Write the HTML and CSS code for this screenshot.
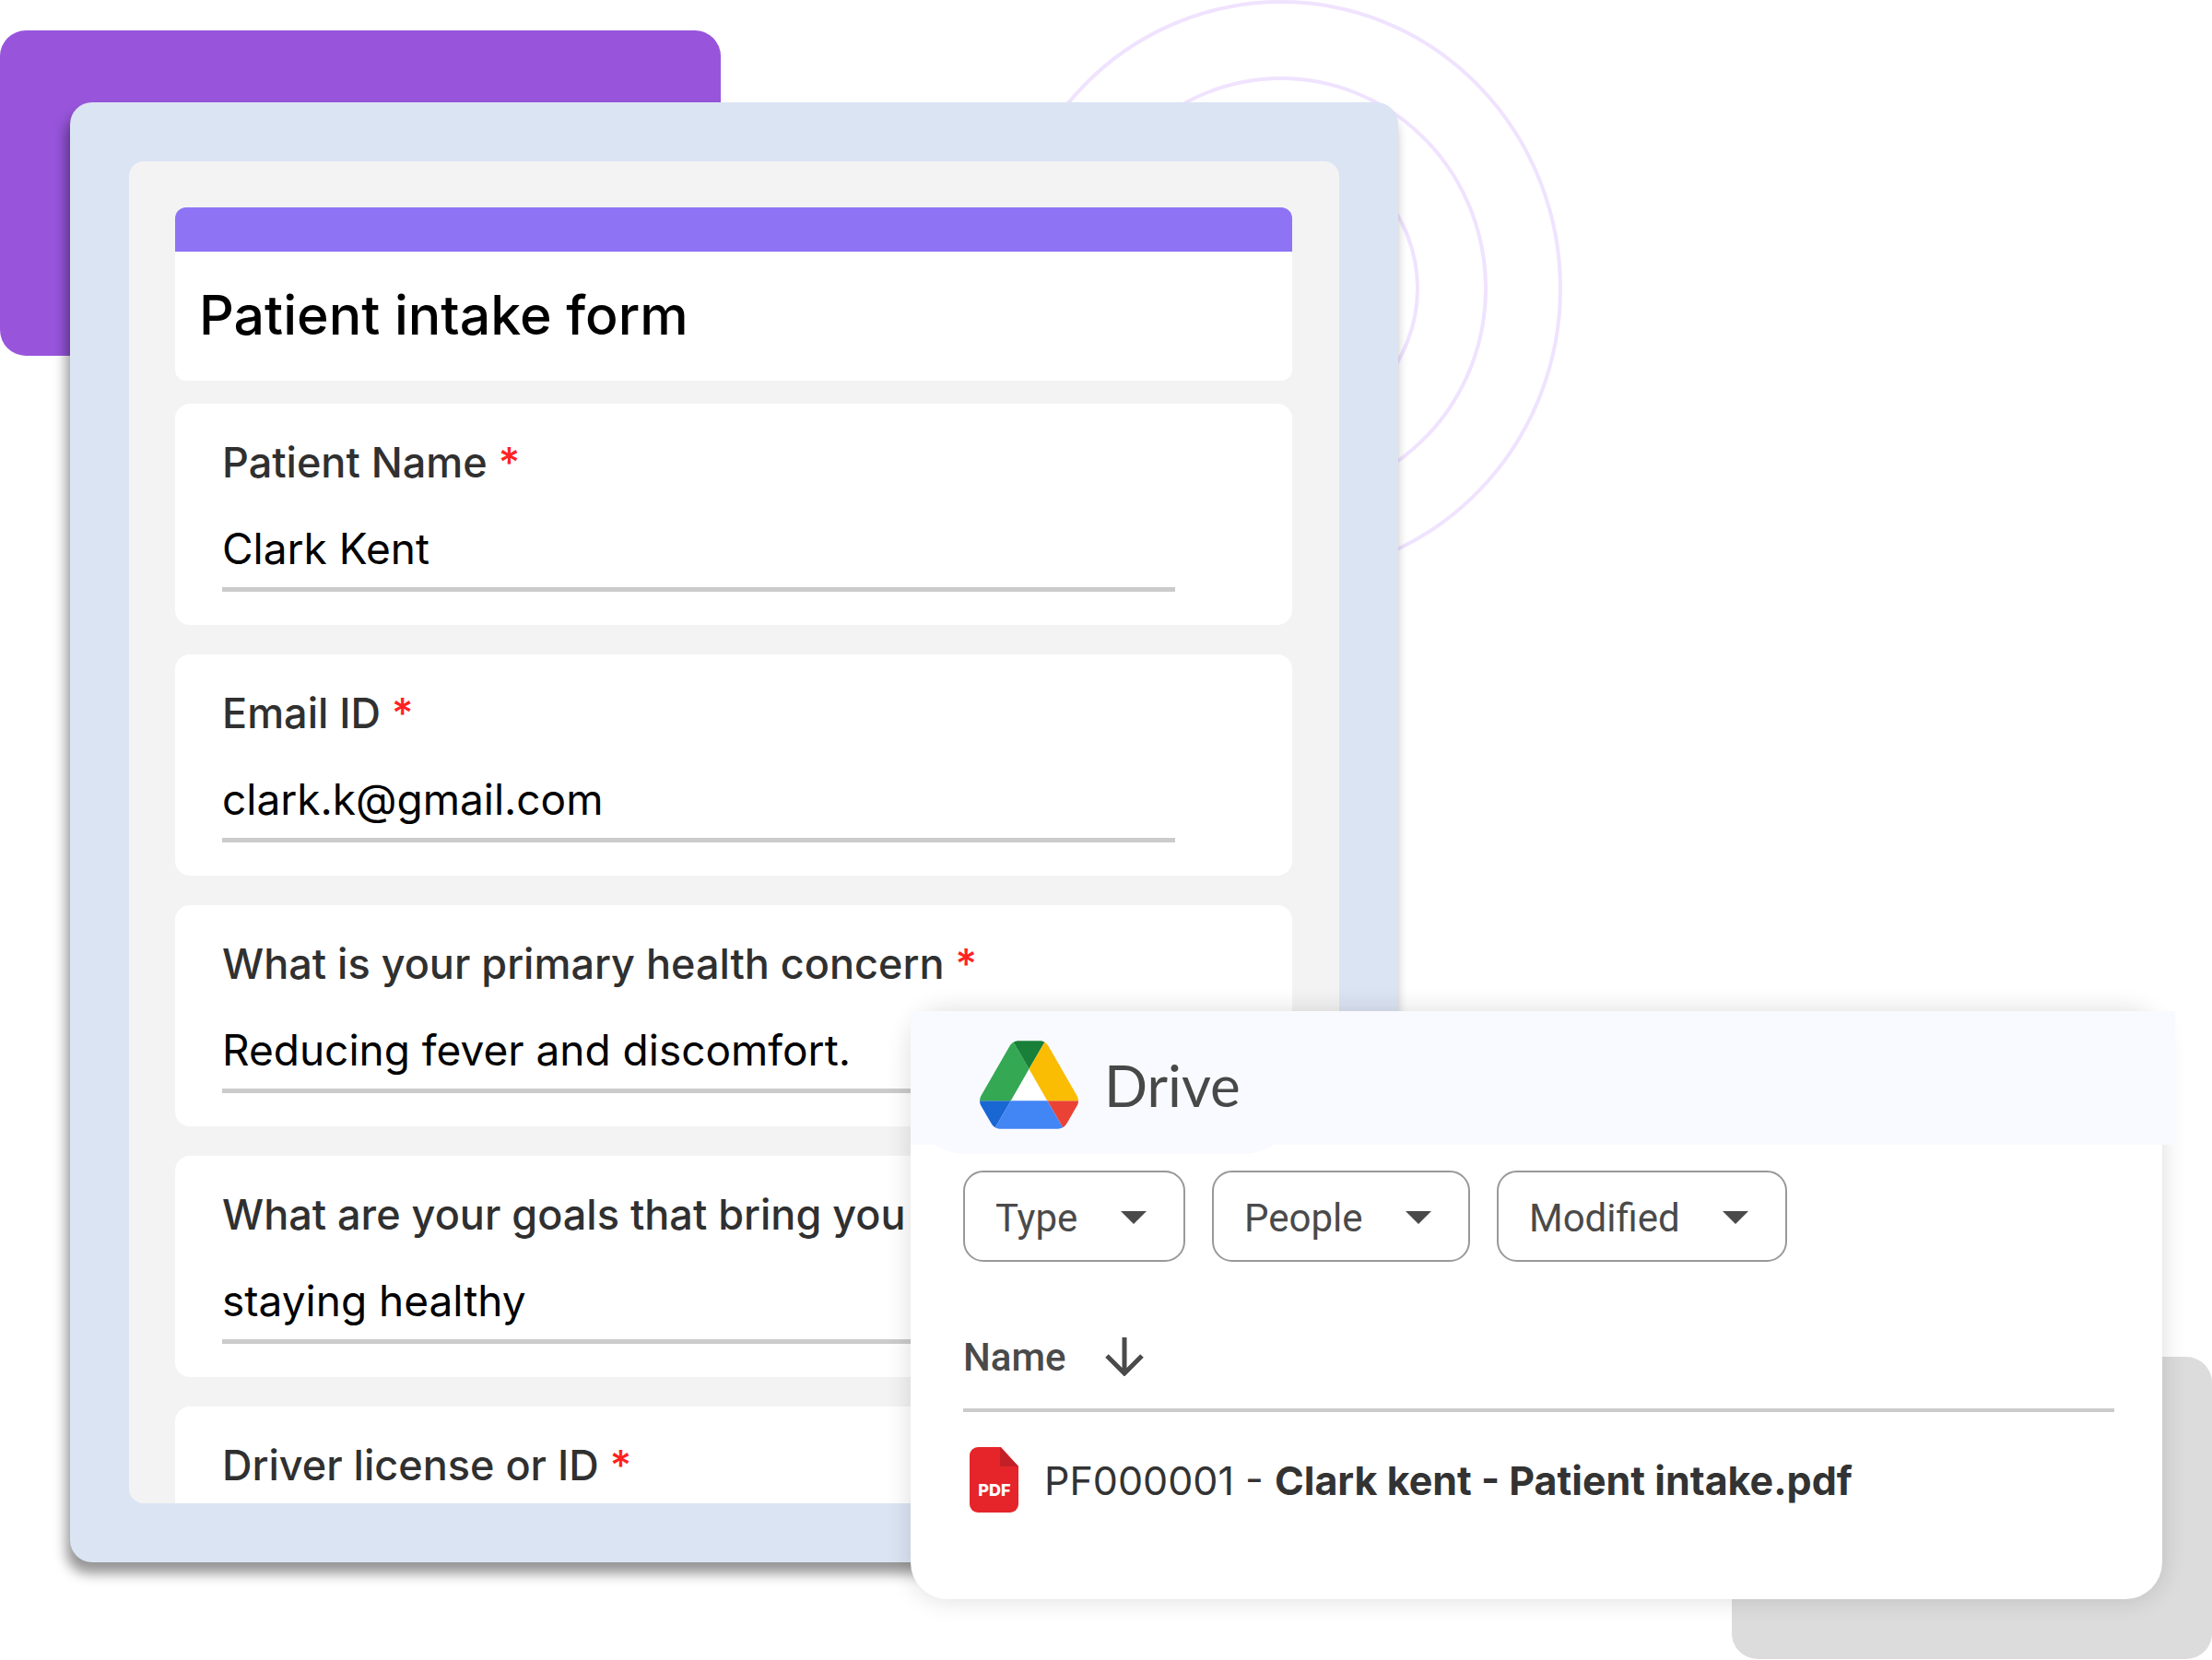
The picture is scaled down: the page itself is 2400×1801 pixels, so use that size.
FILE: index.html
```html
<!DOCTYPE html>
<html lang="en">
<head>
  <meta charset="UTF-8">
  <meta name="viewport" content="width=device-width, initial-scale=1.0">
  <title>Patient intake form</title>
  <link rel="stylesheet" href="styles.css">
</head>

<body>
  <div class="scene">
    <div class="block block-purple"></div>
    <div class="block block-grey"></div>
    <svg class="rings" viewBox="0 0 610 626" fill="none" stroke="#f0e3ff" stroke-width="4" aria-hidden="true">
      <ellipse cx="305" cy="313" rx="303" ry="311"/>
      <ellipse cx="305" cy="313" rx="222" ry="228"/>
      <ellipse cx="305" cy="313" rx="148" ry="153"/>
    </svg>

    <main class="form-frame">
      <form class="form">
        <header class="form-title">
          <h1>Patient intake form</h1>
        </header>

        <div class="field">
          <label for="patient-name">Patient Name <span class="required">*</span></label>
          <input type="text" id="patient-name" value="Clark Kent">
        </div>

        <div class="field">
          <label for="email">Email ID <span class="required">*</span></label>
          <input type="email" id="email" value="clark.k@gmail.com">
        </div>

        <div class="field">
          <label for="concern">What is your primary health concern <span class="required">*</span></label>
          <input type="text" id="concern" value="Reducing fever and discomfort.">
        </div>

        <div class="field">
          <label for="goals">What are your goals that bring you</label>
          <input type="text" id="goals" value="staying healthy">
        </div>

        <div class="field">
          <label for="license">Driver license or ID <span class="required">*</span></label>
          <input type="text" id="license">
        </div>
      </form>
    </main>

    <section class="drive">
      <header class="drive-header">
        <div class="brand">
          <svg class="brand-logo" viewBox="0 0 87.3 78" aria-hidden="true">
            <path fill="#fff" d="M43.65 25 59.8 53H27.5z"/>
            <path fill="#1967d2" d="m6.6 66.85 3.85 6.65c.8 1.4 1.95 2.5 3.3 3.3l13.75-23.8h-27.5c0 1.55.4 3.1 1.2 4.5z"/>
            <path fill="#34a853" d="m43.65 25-13.75-23.8c-1.35.8-2.5 1.9-3.3 3.3l-25.4 44a9.06 9.06 0 0 0-1.2 4.5h27.5z"/>
            <path fill="#ea4335" d="m73.55 76.8c1.35-.8 2.5-1.9 3.3-3.3l1.6-2.75 7.65-13.25c.8-1.4 1.2-2.95 1.2-4.5h-27.5z"/>
            <path fill="#188038" d="m43.65 25 13.75-23.8c-1.35-.8-2.9-1.2-4.5-1.2h-18.5c-1.6 0-3.15.45-4.5 1.2z"/>
            <path fill="#4285f4" d="m59.8 53h-32.3l-13.75 23.8c1.35.8 2.9 1.2 4.5 1.2h50.8c1.6 0 3.15-.45 4.5-1.2z"/>
            <path fill="#fbbc04" d="m73.4 26.5-12.7-22c-.8-1.4-1.95-2.5-3.3-3.3l-13.75 23.8 16.15 28h27.45c0-1.55-.4-3.1-1.2-4.5z"/>
          </svg>
          <span class="brand-name">Drive</span>
        </div>
      </header>

      <div class="filters">
        <div class="chip">
          <select aria-label="Type"><option>Type</option></select>
        </div>
        <div class="chip">
          <select aria-label="People"><option>People</option></select>
        </div>
        <div class="chip">
          <select aria-label="Modified"><option>Modified</option></select>
        </div>
      </div>

      <table class="files">
        <thead>
          <tr>
            <th>
              <button type="button" class="sort">
                Name
                <svg class="sort-arrow" viewBox="0 0 42 42" fill="none" stroke="#4a4a4a" stroke-width="5" aria-hidden="true">
                  <path d="M21 0v38M2 20l19 19 19-19"/>
                </svg>
              </button>
            </th>
          </tr>
        </thead>
        <tbody>
          <tr>
            <td>
              <a href="#" class="file">
                <svg class="file-icon" viewBox="0 0 53 71" aria-hidden="true">
                  <path fill="#e5252a" d="M9 0h25l19 21v41a9 9 0 0 1-9 9H9a9 9 0 0 1-9-9V9a9 9 0 0 1 9-9z"/>
                  <path fill="#c22026" d="M33 0l20 21H33z"/>
                  <text x="27" y="53" text-anchor="middle" class="file-icon-text">PDF</text>
                </svg>
                <span>PF000001 - <strong>Clark kent - Patient intake.pdf</strong></span>
              </a>
            </td>
          </tr>
        </tbody>
      </table>
    </section>
  </div>
</body>
</html>
```
FILE: styles.css
```css
* {
  box-sizing: border-box;
}

body {
  margin: 0;
  background: #fff;
  font-family: Inter, sans-serif;
}

.scene {
  position: relative;
  display: flex;
  height: 100vh;
  min-height: 1200px;
  padding: 111px 0 106px 76px;
  overflow: hidden;
}

/* Background shapes */

.block {
  position: absolute;
  border-radius: 28px;
}

.block-purple {
  top: 33px;
  left: 0;
  width: 782px;
  height: 353px;
  background: #9855dc;
}

.block-grey {
  right: 0;
  bottom: 1px;
  width: 521px;
  height: 328px;
  background: #dcdcdc;
}

.rings {
  position: absolute;
  top: 0;
  left: 1085px;
  width: 610px;
  height: 626px;
}

/* Intake form */

.form-frame {
  position: relative;
  display: flex;
  width: 62%;
  padding: 64px;
  background: #dbe4f3;
  border-radius: 24px;
  box-shadow: -4px 12px 14px rgba(0, 0, 0, 0.42);
}

.form {
  flex: 1;
  display: flex;
  flex-direction: column;
  padding: 50px 51px 0 50px;
  background: #f3f3f3;
  border-radius: 16px;
  overflow: hidden;
}

.form-title {
  flex: none;
  margin-bottom: 25px;
  padding: 31px 26px 34px;
  background: #fff;
  border-top: 48px solid #8e73f5;
  border-radius: 12px;
}

.form-title h1 {
  margin: 0;
  font-size: 59px;
  font-weight: 500;
  line-height: 75px;
  color: #000;
}

.field {
  flex: none;
  display: flex;
  flex-direction: column;
  height: 240px;
  margin-bottom: 32px;
  padding: 36px 127px 36px 51px;
  background: #fff;
  border-radius: 16px;
}

.field label {
  font-size: 45px;
  font-weight: 500;
  line-height: 56px;
  white-space: nowrap;
  color: #303030;
}

.required {
  color: #ff2222;
}

.field input {
  height: 112px;
  padding: 34px 0 12px;
  border: none;
  border-bottom: 5px solid #cbcbcb;
  background: none;
  font-family: inherit;
  font-size: 46px;
  color: #000;
  outline: none;
}

/* Drive window */

.drive {
  position: absolute;
  right: 54px;
  bottom: 66px;
  left: 988px;
  height: 638px;
  background: #fff;
  border-radius: 40px;
  box-shadow: 0 0 28px rgba(0, 0, 0, 0.14);
}

.drive-header {
  height: 145px;
  margin-right: -14px;
  background: #f9faff;
}

.brand {
  display: flex;
  align-items: center;
  gap: 28px;
  width: 420px;
  height: 155px;
  padding: 5px 0 0 75px;
  background: #f9faff;
  border-radius: 0 0 60px 60px;
}

.brand-logo {
  width: 107px;
  height: 96px;
}

.brand-name {
  font-family: Lato, sans-serif;
  font-size: 62px;
  line-height: 76px;
  color: #474847;
}

.filters {
  display: flex;
  gap: 29px;
  padding: 28px 57px 0;
}

.chip {
  position: relative;
}

.chip::after {
  content: "";
  position: absolute;
  top: 44px;
  right: 42px;
  border: 14px solid transparent;
  border-top-color: #4a4a4a;
  border-bottom: none;
  pointer-events: none;
}

.chip select {
  appearance: none;
  height: 99px;
  padding: 3px 114px 0 33px;
  border: 2px solid #999;
  border-radius: 22px;
  background: #fff;
  font-family: Roboto, sans-serif;
  font-size: 42px;
  color: #4a4a4a;
}

.files {
  width: calc(100% - 109px);
  margin: 53px 52px 0 57px;
  border-collapse: collapse;
}

.files th,
.files td {
  padding: 0;
  text-align: left;
}

.files th {
  height: 108px;
  padding-bottom: 6px;
  border-bottom: 4px solid #cbcbcb;
}

.sort {
  display: flex;
  align-items: center;
  gap: 42px;
  padding: 0;
  border: none;
  background: none;
  font-family: Roboto, sans-serif;
  font-size: 42px;
  font-weight: 500;
  color: #4a4a4a;
}

.sort-arrow {
  width: 42px;
  height: 42px;
}

.files td {
  padding-top: 38px;
}

.file {
  display: flex;
  align-items: center;
  gap: 28px;
  padding-left: 7px;
  font-size: 43px;
  color: #333;
  text-decoration: none;
}

.file strong {
  font-weight: 700;
}

.file-icon {
  width: 53px;
  height: 71px;
}

.file-icon-text {
  font-family: Inter, sans-serif;
  font-size: 18px;
  font-weight: 800;
  fill: #fff;
}
```
